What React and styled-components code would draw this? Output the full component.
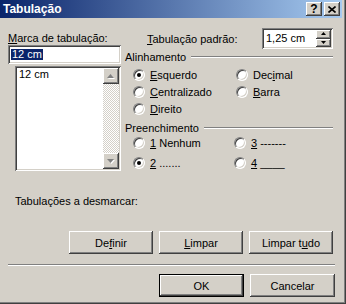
import styled, { createGlobalStyle, css } from "styled-components";

const face = "#D4D0C8";

const GlobalStyle = createGlobalStyle`
html, body { margin: 0; padding: 0; background: ${face}; }
body { font-family: "Liberation Sans", Arial, sans-serif; font-size: 11px; color: #000; }
`;

const raised = css`
box-shadow: inset -1px -1px #404040, inset 1px 1px #fff, inset -2px -2px #808080, inset 2px 2px ${face};
`;
const sunken = css`
box-shadow: inset 1px 1px #808080, inset -1px -1px #fff, inset 2px 2px #404040, inset -2px -2px ${face};
`;

const Dialog = styled.div`
width: 346px;
height: 304px;
box-sizing: border-box;
padding: 0 4px 4px 0;
background: ${face};
display: flex;
flex-direction: column;
box-shadow: inset -1px -1px #404040, inset -2px -2px #808080;
`;
const TitleBar = styled.div`
height: 18px;
display: flex;
align-items: center;
padding: 0 2px 0 3px;
background: linear-gradient(to right, #0a246a, #a6caf0);
color: #fff;
font-weight: bold;
font-size: 12px;
`;
const TitleText = styled.div`
flex: 1;
`;
const TitleButton = styled.div`
width: 16px;
height: 14px;
margin-left: 2px;
background: ${face};
${raised};
display: flex;
align-items: center;
justify-content: center;
color: #000;
font-size: 12px;
font-weight: bold;
line-height: 1;
`;
const Body = styled.div`
display: flex;
flex-direction: column;
padding: 0 7px 0 8px;
`;
const Top = styled.div`
display: flex;
margin-top: 10px;
`;
const LeftCol = styled.div`
width: 113px;
display: flex;
flex-direction: column;
`;
const RightCol = styled.div`
margin-left: 4px;
flex: 1;
display: flex;
flex-direction: column;
`;
const Label = styled.div`
height: 14px;
line-height: 14px;
margin-top: ${p => p.$mt || 0}px;
margin-left: ${p => p.$ml || 0}px;
white-space: nowrap;
`;
const TextBox = styled.div`
height: 19px;
box-sizing: border-box;
background: #fff;
${sunken};
padding: 0 0 0 3px;
display: flex;
align-items: center;
`;
const Selected = styled.span`
background: #0a246a;
color: #fff;
line-height: 11px;
padding: 0 1px;
`;
const ListBox = styled.div`
margin: 2px 0 0 7px;
height: 105px;
box-sizing: border-box;
padding: 2px;
background: #fff;
${sunken};
display: flex;
`;
const ListItems = styled.div`
flex: 1;
padding-left: 2px;
line-height: 13px;
`;
const ScrollBar = styled.div`
width: 16px;
display: flex;
flex-direction: column;
justify-content: space-between;
background: repeating-conic-gradient(${face} 0 25%, #fff 0 50%) 0 0 / 2px 2px;
`;
const ArrowButton = styled.div`
width: 16px;
height: 16px;
box-sizing: border-box;
background: ${face};
${raised};
display: flex;
align-items: center;
justify-content: center;
`;
const PadraoRow = styled.div`
height: 21px;
display: flex;
align-items: center;
`;
const SpinBox = styled.div`
margin-left: auto;
margin-right: 2px;
width: 71px;
height: 21px;
box-sizing: border-box;
padding: 2px;
background: #fff;
${sunken};
display: flex;
`;
const SpinText = styled.div`
flex: 1;
padding-left: 2px;
line-height: 17px;
`;
const SpinButtons = styled.div`
width: 15px;
display: flex;
flex-direction: column;
`;
const SpinButton = styled.div`
flex: 1;
background: ${face};
${raised};
display: flex;
align-items: center;
justify-content: center;
`;
const GroupHeader = styled.div`
height: 13px;
margin-top: ${p => p.$mt}px;
display: flex;
align-items: center;
gap: 5px;
padding-right: 2px;
&::after {
  content: "";
  flex: 1;
  border-top: 1px solid #808080;
  border-bottom: 1px solid #fff;
}
`;
const RadioGrid = styled.div`
display: grid;
grid-template-columns: ${p => p.$col}px auto;
grid-auto-rows: ${p => p.$row}px;
row-gap: ${p => p.$gap}px;
margin-top: ${p => p.$mt}px;
padding-left: 8px;
`;
const Radio = styled.label`
display: flex;
align-items: center;
gap: 5px;
white-space: nowrap;
`;
const RadioCircle = styled.span`
width: 12px;
height: 12px;
box-sizing: border-box;
border-radius: 50%;
border: 1px solid;
border-color: #808080 #fff #fff #808080;
background: #fff;
box-shadow: inset 1px 1px #404040, inset -1px -1px ${face};
display: flex;
align-items: center;
justify-content: center;
&::after {
  content: "";
  width: 4px;
  height: 4px;
  border-radius: 50%;
  background: #000;
  display: ${p => (p.$checked ? "block" : "none")};
}
`;
const ButtonRow = styled.div`
display: flex;
justify-content: flex-end;
gap: 6px;
margin-top: ${p => p.$mt}px;
padding-right: ${p => p.$pr || 0}px;
`;
const Button = styled.div`
width: ${p => p.$w || 84}px;
height: 23px;
box-sizing: border-box;
background: ${face};
${raised};
display: flex;
align-items: center;
justify-content: center;
${p => p.$default && css`
  box-shadow: inset 0 0 0 1px #000, inset -2px -2px #404040, inset 2px 2px #fff, inset -3px -3px #808080;
`}
`;
const Separator = styled.div`
margin-top: 10px;
border-top: 1px solid #808080;
border-bottom: 1px solid #fff;
`;

const Arrow = ({ up, color = "#808080", shadow = true, w = 7, h = 4 }) => (
  <svg width={w + 1} height={h + 1} viewBox={`0 0 ${w + 1} ${h + 1}`}>
    {shadow && (
      <polygon
        points={up ? `1,${h + 1} ${w + 1},${h + 1} ${w / 2 + 1},1` : `1,1 ${w + 1},1 ${w / 2 + 1},${h + 1}`}
        fill="#fff"
      />
    )}
    <polygon
      points={up ? `0,${h} ${w},${h} ${w / 2},0` : `0,0 ${w},0 ${w / 2},${h}`}
      fill={color}
    />
  </svg>
);

export default function App() {
  return (
    <Dialog>
      <GlobalStyle />
      <TitleBar>
        <TitleText>Tabulação</TitleText>
        <TitleButton>?</TitleButton>
        <TitleButton>
          <svg width="8" height="7" viewBox="0 0 8 7">
            <path d="M0.5 0.5 L7.5 6.5 M7.5 0.5 L0.5 6.5" stroke="#000" strokeWidth="1.6" />
          </svg>
        </TitleButton>
      </TitleBar>
      <Body>
        <Top>
          <LeftCol>
            <Label $mt={3}><u>M</u>arca de tabulação:</Label>
            <TextBox><Selected>12 cm</Selected></TextBox>
            <ListBox>
              <ListItems>12 cm</ListItems>
              <ScrollBar>
                <ArrowButton><Arrow up /></ArrowButton>
                <ArrowButton><Arrow /></ArrowButton>
              </ScrollBar>
            </ListBox>
          </LeftCol>
          <RightCol>
            <PadraoRow>
              <Label $ml={22}><u>T</u>abulação padrão:</Label>
              <SpinBox>
                <SpinText>1,25 cm</SpinText>
                <SpinButtons>
                  <SpinButton><Arrow up color="#000" shadow={false} w={5} h={3} /></SpinButton>
                  <SpinButton><Arrow color="#000" shadow={false} w={5} h={3} /></SpinButton>
                </SpinButtons>
              </SpinBox>
            </PadraoRow>
            <GroupHeader $mt={1}>Alinhamento</GroupHeader>
            <RadioGrid $col={103} $row={17} $gap={0} $mt={3}>
              <Radio><RadioCircle $checked /><span><u>E</u>squerdo</span></Radio>
              <Radio><RadioCircle /><span>Dec<u>i</u>mal</span></Radio>
              <Radio><RadioCircle /><span><u>C</u>entralizado</span></Radio>
              <Radio><RadioCircle /><span><u>B</u>arra</span></Radio>
              <Radio><RadioCircle /><span><u>D</u>ireito</span></Radio>
            </RadioGrid>
            <GroupHeader $mt={4}>Preenchimento</GroupHeader>
            <RadioGrid $col={101} $row={18} $gap={2} $mt={0}>
              <Radio><RadioCircle /><span><u>1</u> Nenhum</span></Radio>
              <Radio><RadioCircle /><span><u>3</u> -------</span></Radio>
              <Radio><RadioCircle $checked /><span><u>2</u> .......</span></Radio>
              <Radio><RadioCircle /><span><u>4</u> ____</span></Radio>
            </RadioGrid>
          </RightCol>
        </Top>
        <Label $mt={22} $ml={7}>Tabulações a desmarcar:</Label>
        <ButtonRow $mt={23} $pr={2}>
          <Button>De<u>f</u>inir</Button>
          <Button><u>L</u>impar</Button>
          <Button>Limpar t<u>u</u>do</Button>
        </ButtonRow>
        <Separator />
        <ButtonRow $mt={8}>
          <Button $default $w={85}>OK</Button>
          <Button $w={85}>Cancelar</Button>
        </ButtonRow>
      </Body>
    </Dialog>
  );
}
